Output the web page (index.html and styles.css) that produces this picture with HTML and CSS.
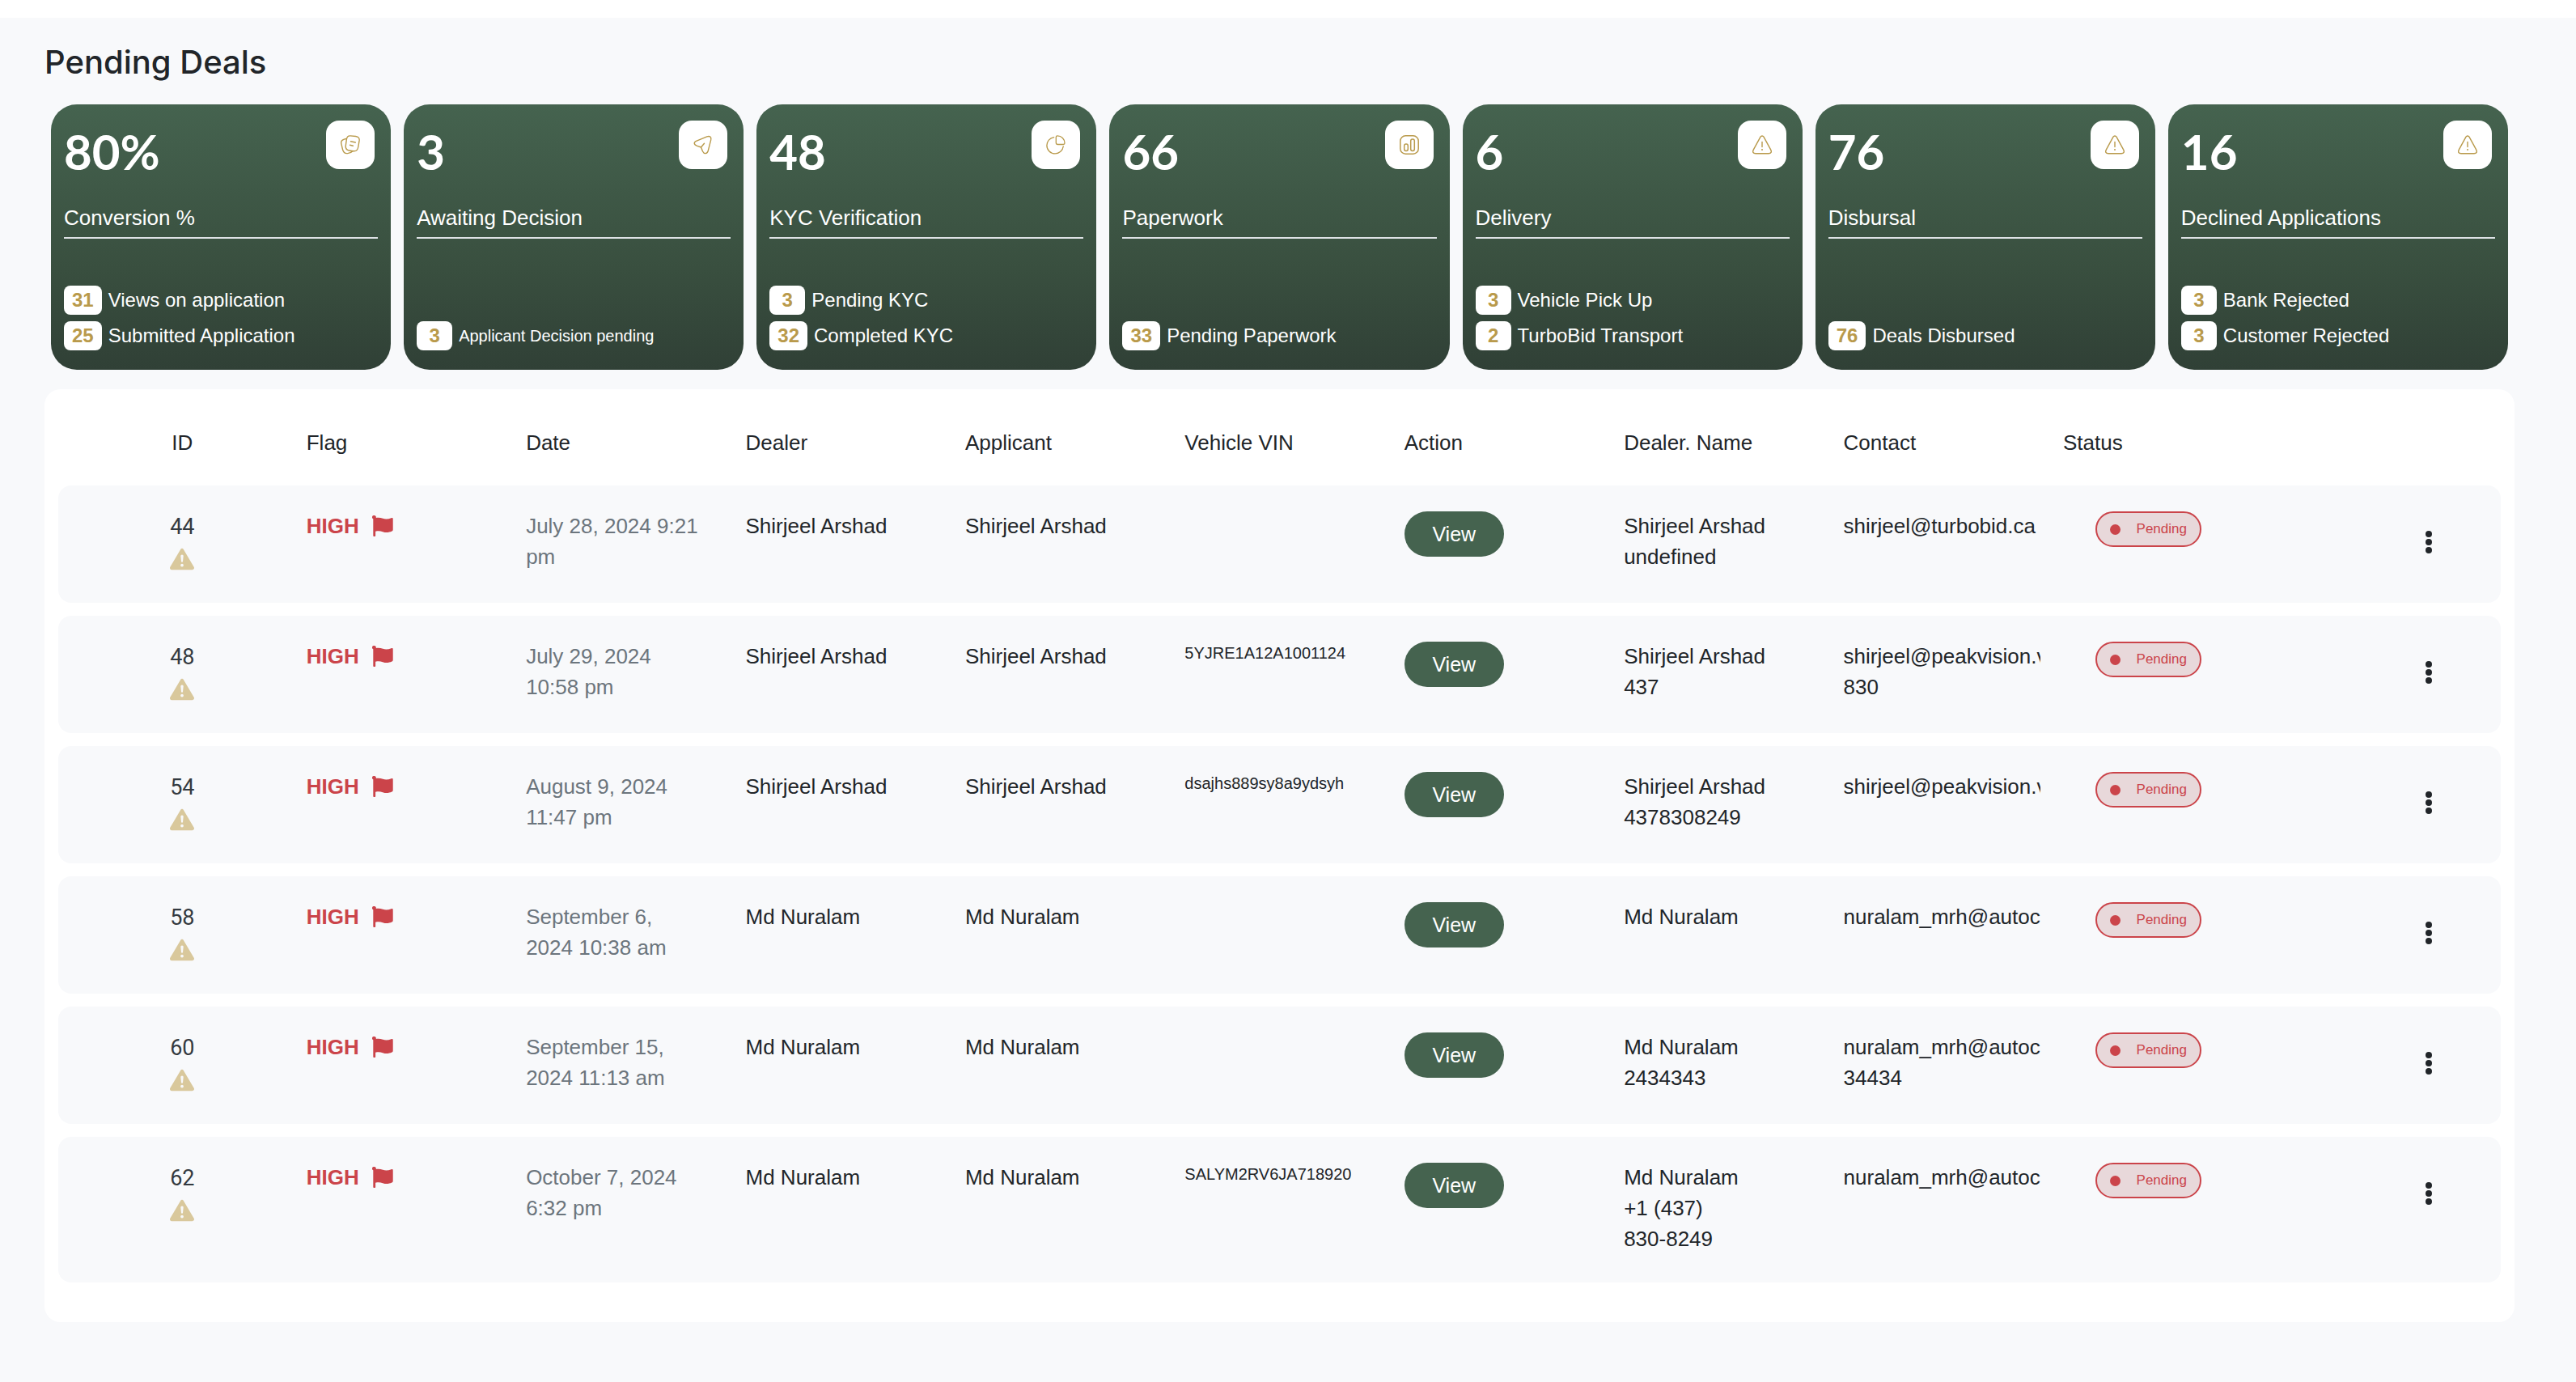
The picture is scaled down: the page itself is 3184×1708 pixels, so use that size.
FILE: index.html
```html
<!DOCTYPE html>
<html lang="en">
<head>
<meta charset="utf-8">
<title>Pending Deals</title>
<link rel="stylesheet" href="styles.css">
</head>
<body>
<svg class="sprite" aria-hidden="true">
  <symbol id="i-cards" viewBox="0 0 24 24"><g fill="none" stroke="currentColor" stroke-width="1.400" stroke-linecap="round" stroke-linejoin="round"><path d="M12 .9l6.700 .6c3.200.4 4.800 2.200 4.400 5.200l-1.300 7.800c-.6 3.800-3 5.700-6.300 5.200l-5-.7C7.300 18.500 5.900 16.300 6.300 13l1-7.400C7.700 2.400 9.200.7 12 .9z"/><path d="M7 4.500C2.200 5.200.3 6.500.7 9.800l1.700 7.500c.9 3.700 3.200 5.700 6.200 5.300 2.600-.2 4.600-1 6.200-2.900M12.500 7.800l5.800 1.200M11.600 12.300l3.800.9"/></g></symbol>
  <symbol id="i-send" viewBox="0 0 24 24"><path d="M3.500 7.400L16.800 1.900c3.500-1.300 5.700.4 4.900 4l-3.400 13.300c-1.200 4.200-5 4.600-6.800.8l-2-5-4.800-1.600C.4 12 .2 9 3.500 7.400zM9.500 15l4-4.800" fill="none" stroke="currentColor" stroke-width="1.400" stroke-linecap="round" stroke-linejoin="round"/></symbol>
  <symbol id="i-pie" viewBox="0 0 24 24"><path d="M9.700 2.600C4.500 3.500.9 7.700.9 12.700c0 5.700 4.600 10.200 10.200 10.200 5.200 0 9.600-3.900 10.200-9.100M14 .8c-1.200 0-1.700.5-1.700 1.700v6.800c0 1.500.7 2.200 2.200 2.200h6.800c1.200 0 1.700-.5 1.700-1.700C23 4.900 19 .8 14 .8z" fill="none" stroke="currentColor" stroke-width="1.300" stroke-linecap="round"/></symbol>
  <symbol id="i-chart" viewBox="0 0 24 24"><g fill="none" stroke="currentColor" stroke-width="1.500"><rect x=".8" y=".8" width="22.400" height="22.400" rx="6.500"/><rect x="5.700" y="11" width="4.600" height="8.500" rx="2.200"/><rect x="13.700" y="5" width="4.600" height="14.500" rx="2.200"/></g></symbol>
  <symbol id="i-alert" viewBox="0 0 24 24"><path d="M10 2.200c1-1.600 3-1.600 4 0l8.600 15.600c1.600 3 .5 5-2.600 5H4c-3.100 0-4.200-2-2.600-5z" fill="none" stroke="currentColor" stroke-width="1.400"/><path d="M12 8.500v6" fill="none" stroke="currentColor" stroke-width="1.400" stroke-linecap="round"/><circle cx="12" cy="18" r="1" fill="currentColor"/></symbol>
  <symbol id="i-warn" viewBox="0 0 16 16"><path fill="currentColor" d="M8.982 1.566a1.130 1.130 0 0 0-1.960 0L.165 13.233c-.457.778.091 1.767.980 1.767h13.713c.889 0 1.438-.990.980-1.767zM8 5c.535 0 .954.462.900.995l-.350 3.507a.552.552 0 0 1-1.100 0L7.100 5.995A.905.905 0 0 1 8 5m.002 6a1 1 0 1 1 0 2 1 1 0 0 1 0-2"/></symbol>
  <symbol id="i-flag" viewBox="0 0 26 26"><path fill="currentColor" d="M2.500 0A2.200 2.200 0 0 1 4.700 3c3-.6 5.600-.3 8.500.8 3.200 1.200 6.500 1 10.400-.6 1.200-.5 2.100 0 2.100 1.200v13.200c0 1-.4 1.600-1.300 2-4 1.800-7.700 1.900-11.300.6-3-1.100-5.700-1.300-9-.5V25c0 .7-.4 1-1.400 1s-1.400-.3-1.400-1V4.200A2.200 2.200 0 0 1 2.500 0z"/></symbol>
  <symbol id="i-dots" viewBox="0 0 8 28"><g fill="currentColor"><circle cx="4" cy="4" r="4"/><circle cx="4" cy="14" r="4"/><circle cx="4" cy="24" r="4"/></g></symbol>
</svg>
<main class="page">
  <h1 class="title">Pending Deals</h1>
  <section class="cards">
    <article class="card">
      <div class="card-head"><strong class="count">80%</strong><span class="icon-box"><svg><use href="#i-cards"/></svg></span></div>
      <h2 class="label">Conversion %</h2>
      <ul class="stats"><li><b>31</b><span>Views on application</span></li><li><b>25</b><span>Submitted Application</span></li></ul>
    </article>
    <article class="card">
      <div class="card-head"><strong class="count">3</strong><span class="icon-box"><svg><use href="#i-send"/></svg></span></div>
      <h2 class="label">Awaiting Decision</h2>
      <ul class="stats"><li><b>3</b><span class="small">Applicant Decision pending</span></li></ul>
    </article>
    <article class="card">
      <div class="card-head"><strong class="count">48</strong><span class="icon-box"><svg><use href="#i-pie"/></svg></span></div>
      <h2 class="label">KYC Verification</h2>
      <ul class="stats"><li><b>3</b><span>Pending KYC</span></li><li><b>32</b><span>Completed KYC</span></li></ul>
    </article>
    <article class="card">
      <div class="card-head"><strong class="count">66</strong><span class="icon-box"><svg><use href="#i-chart"/></svg></span></div>
      <h2 class="label">Paperwork</h2>
      <ul class="stats"><li><b>33</b><span>Pending Paperwork</span></li></ul>
    </article>
    <article class="card">
      <div class="card-head"><strong class="count">6</strong><span class="icon-box"><svg><use href="#i-alert"/></svg></span></div>
      <h2 class="label">Delivery</h2>
      <ul class="stats"><li><b>3</b><span>Vehicle Pick Up</span></li><li><b>2</b><span>TurboBid Transport</span></li></ul>
    </article>
    <article class="card">
      <div class="card-head"><strong class="count">76</strong><span class="icon-box"><svg><use href="#i-alert"/></svg></span></div>
      <h2 class="label">Disbursal</h2>
      <ul class="stats"><li><b>76</b><span>Deals Disbursed</span></li></ul>
    </article>
    <article class="card">
      <div class="card-head"><strong class="count">16</strong><span class="icon-box"><svg><use href="#i-alert"/></svg></span></div>
      <h2 class="label">Declined Applications</h2>
      <ul class="stats"><li><b>3</b><span>Bank Rejected</span></li><li><b>3</b><span>Customer Rejected</span></li></ul>
    </article>
  </section>
  <section class="panel">
    <table class="deals">
      <colgroup><col class="c-id"><col class="c-std" span="8"><col class="c-status"><col class="c-menu"></colgroup>
      <thead>
        <tr><th class="id">ID</th><th>Flag</th><th>Date</th><th>Dealer</th><th>Applicant</th><th>Vehicle VIN</th><th>Action</th><th>Dealer. Name</th><th>Contact</th><th>Status</th><th></th></tr>
      </thead>
      <tbody>
        <tr>
          <td class="id">44<svg><use href="#i-warn"/></svg></td>
          <td><span class="flag">HIGH<svg><use href="#i-flag"/></svg></span></td>
          <td class="date">July 28, 2024 9:21 pm</td><td>Shirjeel Arshad</td><td>Shirjeel Arshad</td><td class="vin"></td>
          <td class="act"><button class="view" type="button">View</button></td>
          <td class="name">Shirjeel Arshad<br>undefined</td>
          <td><div class="contact">shirjeel@turbobid.ca</div></td>
          <td class="act"><span class="pill">Pending</span></td>
          <td class="menu"><button class="more" type="button" aria-label="More"><svg><use href="#i-dots"/></svg></button></td>
        </tr>
        <tr>
          <td class="id">48<svg><use href="#i-warn"/></svg></td>
          <td><span class="flag">HIGH<svg><use href="#i-flag"/></svg></span></td>
          <td class="date">July 29, 2024 10:58 pm</td><td>Shirjeel Arshad</td><td>Shirjeel Arshad</td><td class="vin">5YJRE1A12A1001124</td>
          <td class="act"><button class="view" type="button">View</button></td>
          <td class="name">Shirjeel Arshad<br>437</td>
          <td><div class="contact">shirjeel@peakvision.v<br>830</div></td>
          <td class="act"><span class="pill">Pending</span></td>
          <td class="menu"><button class="more" type="button" aria-label="More"><svg><use href="#i-dots"/></svg></button></td>
        </tr>
        <tr>
          <td class="id">54<svg><use href="#i-warn"/></svg></td>
          <td><span class="flag">HIGH<svg><use href="#i-flag"/></svg></span></td>
          <td class="date">August 9, 2024 11:47 pm</td><td>Shirjeel Arshad</td><td>Shirjeel Arshad</td><td class="vin">dsajhs889sy8a9ydsyh</td>
          <td class="act"><button class="view" type="button">View</button></td>
          <td class="name">Shirjeel Arshad<br>4378308249</td>
          <td><div class="contact">shirjeel@peakvision.v</div></td>
          <td class="act"><span class="pill">Pending</span></td>
          <td class="menu"><button class="more" type="button" aria-label="More"><svg><use href="#i-dots"/></svg></button></td>
        </tr>
        <tr>
          <td class="id">58<svg><use href="#i-warn"/></svg></td>
          <td><span class="flag">HIGH<svg><use href="#i-flag"/></svg></span></td>
          <td class="date">September 6, 2024 10:38 am</td><td>Md Nuralam</td><td>Md Nuralam</td><td class="vin"></td>
          <td class="act"><button class="view" type="button">View</button></td>
          <td class="name">Md Nuralam</td>
          <td><div class="contact">nuralam_mrh@autoc</div></td>
          <td class="act"><span class="pill">Pending</span></td>
          <td class="menu"><button class="more" type="button" aria-label="More"><svg><use href="#i-dots"/></svg></button></td>
        </tr>
        <tr>
          <td class="id">60<svg><use href="#i-warn"/></svg></td>
          <td><span class="flag">HIGH<svg><use href="#i-flag"/></svg></span></td>
          <td class="date">September 15, 2024 11:13 am</td><td>Md Nuralam</td><td>Md Nuralam</td><td class="vin"></td>
          <td class="act"><button class="view" type="button">View</button></td>
          <td class="name">Md Nuralam<br>2434343</td>
          <td><div class="contact">nuralam_mrh@autoc<br>34434</div></td>
          <td class="act"><span class="pill">Pending</span></td>
          <td class="menu"><button class="more" type="button" aria-label="More"><svg><use href="#i-dots"/></svg></button></td>
        </tr>
        <tr>
          <td class="id">62<svg><use href="#i-warn"/></svg></td>
          <td><span class="flag">HIGH<svg><use href="#i-flag"/></svg></span></td>
          <td class="date">October 7, 2024 6:32 pm</td><td>Md Nuralam</td><td>Md Nuralam</td><td class="vin">SALYM2RV6JA718920</td>
          <td class="act"><button class="view" type="button">View</button></td>
          <td class="name">Md Nuralam<br>+1 (437)<br>830-8249</td>
          <td><div class="contact">nuralam_mrh@autoc</div></td>
          <td class="act"><span class="pill">Pending</span></td>
          <td class="menu"><button class="more" type="button" aria-label="More"><svg><use href="#i-dots"/></svg></button></td>
        </tr>
      </tbody>
    </table>
  </section>
</main>
</body>
</html>
```
FILE: styles.css
```css
* { box-sizing: border-box; }
html { background: #f8f9fb; }
body {
  margin: 0;
  border-top: 22px solid #fff;
  background: #f8f9fb;
  color: #212529;
  font-family: "Liberation Sans", Arial, sans-serif;
  font-size: 26px;
  line-height: 38px;
}
.sprite { display: none; }
.page { padding: 31px 76px 72px 55px; }
.title {
  margin: 0 0 28px;
  font: 500 40px/48px Inter, sans-serif;
}

/* Summary cards */
.cards {
  display: grid;
  grid-template-columns: repeat(7, 1fr);
  gap: 16px;
  padding: 0 8px;
}
.card {
  padding: 20px 16px 24px;
  border-radius: 32px;
  background: linear-gradient(#45634f, #394f3f 62%, #304036);
  color: #fff;
}
.card-head {
  display: flex;
  justify-content: space-between;
  padding-right: 4px;
}
.count { font: 700 60px/76px Lato, sans-serif; }
.icon-box {
  display: grid;
  place-items: center;
  width: 60px;
  height: 60px;
  border-radius: 16px;
  background: #fff;
  color: #b99a4b;
}
.icon-box svg { width: 24px; height: 24px; }
.label {
  margin: 25px 0 58px;
  padding-bottom: 5px;
  border-bottom: 2px solid #dee2e6;
  font-size: 26px;
  font-weight: 400;
  line-height: 38px;
}
.stats {
  display: flex;
  flex-direction: column;
  justify-content: flex-end;
  gap: 8px;
  min-height: 80px;
  margin: 0;
  padding: 0;
  list-style: none;
  font-size: 24px;
  line-height: 36px;
}
.stats li { display: flex; gap: 8px; }
.stats b {
  min-width: 44px;
  padding: 0 10px;
  border-radius: 8px;
  background: #fff;
  color: #b99a4b;
  text-align: center;
}
.stats .small { font-size: 20px; }

/* Deals table */
.panel {
  margin-top: 24px;
  padding: 16px 17px 33px;
  border-radius: 20px;
  background: #fff;
}
.deals {
  width: 100%;
  table-layout: fixed;
  border-collapse: separate;
  border-spacing: 0 16px;
}
.c-id { width: 10.16%; }
.c-std { width: 8.99%; }
.c-status { width: 12%; }
.c-menu { width: 5.92%; }
.deals th {
  height: 71px;
  padding: 0 0 4px;
  font-weight: 400;
  text-align: left;
}
.deals td {
  height: 145px;
  padding: 31px 32px 33px 0;
  background: #f8f9fb;
  vertical-align: top;
}
.deals td:first-child { border-radius: 16px 0 0 16px; }
.deals td:last-child { border-radius: 0 16px 16px 0; }
.deals .id { padding-right: 0; text-align: center; }
.deals td.id {
  padding-top: 32px;
  color: #343a40;
  font-family: Roboto, sans-serif;
  font-size: 27px;
}
.id svg {
  display: block;
  width: 30px;
  height: 30px;
  margin: 6px auto 0;
  color: #d9c89c;
}
.flag {
  display: flex;
  align-items: center;
  gap: 16px;
  color: #cb444a;
  font-weight: 700;
}
.flag svg { width: 26px; height: 26px; }
.deals .date { padding-right: 58px; color: #6c757d; }
.deals .vin {
  padding-right: 0;
  font-size: 20px;
  line-height: 30px;
}
.deals .name { padding-bottom: 35px; }
.deals .act { padding-bottom: 0; padding-top: 32px; }
.contact { margin-right: -4px; overflow: hidden; white-space: nowrap; }
.view {
  display: block;
  width: 123px;
  height: 56px;
  padding: 0;
  border: 0;
  border-radius: 28px;
  background: #45634f;
  color: #fff;
  font: 400 25px/56px "Liberation Sans", Arial, sans-serif;
}
.pill {
  display: flex;
  align-items: center;
  justify-content: space-between;
  width: 131px;
  height: 44px;
  margin-left: 40px;
  padding: 0 16px;
  border: 2px solid #cb444a;
  border-radius: 22px;
  background: #e8d8da;
  color: #cb444a;
  font-size: 17px;
}
.pill::before {
  content: "";
  width: 13px;
  height: 13px;
  border-radius: 50%;
  background: #cb444a;
}
.deals .menu { padding: 56px 0 0; }
.more {
  display: block;
  margin: 0 auto;
  padding: 0;
  border: 0;
  background: none;
  color: #212529;
}
.more svg { display: block; width: 8px; height: 28px; }
```
